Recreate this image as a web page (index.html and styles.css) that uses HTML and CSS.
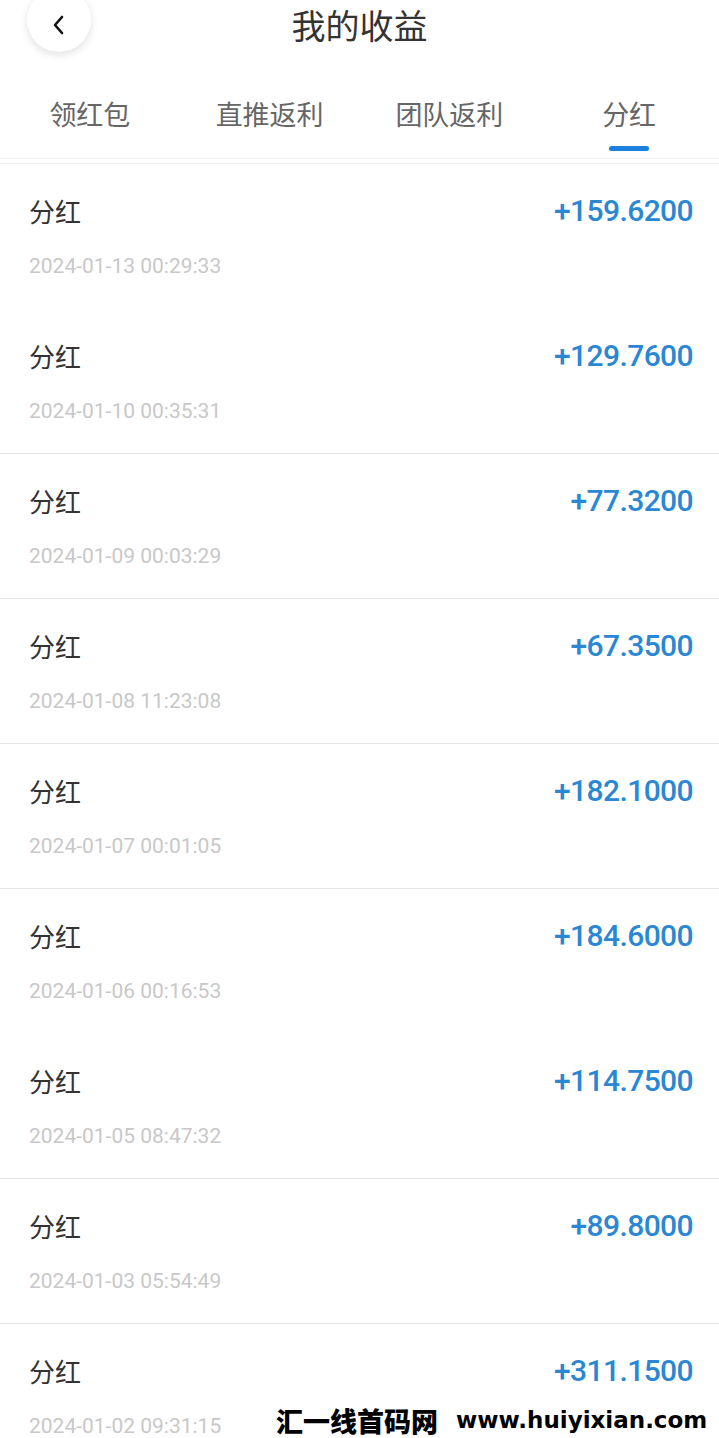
FILE: index.html
```html
<!DOCTYPE html>
<html lang="zh-CN">
<head>
  <meta charset="utf-8">
  <meta name="viewport" content="width=device-width,initial-scale=1">
  <title>我的收益</title>
  <link rel="stylesheet" href="styles.css">
</head>
<body>
  <header>
    <div class="topbar">
      <a class="back">
        <svg width="16" height="22" viewBox="0 0 16 22"><polyline points="11,3 4,11 11,19" fill="none" stroke="#111" stroke-width="2.6" stroke-linecap="round" stroke-linejoin="round"/></svg>
      </a>
      <h1>我的收益</h1>
    </div>
    <nav class="tabs">
      <div class="tab">领红包</div>
      <div class="tab">直推返利</div>
      <div class="tab">团队返利</div>
      <div class="tab active">分红</div>
    </nav>
  </header>

  <main class="list">
    <div class="row no-line">
      <div class="line"><span class="name">分红</span><span class="amount">+159.6200</span></div>
      <div class="date">2024-01-13 00:29:33</div>
    </div>
    <div class="row">
      <div class="line"><span class="name">分红</span><span class="amount">+129.7600</span></div>
      <div class="date">2024-01-10 00:35:31</div>
    </div>
    <div class="row">
      <div class="line"><span class="name">分红</span><span class="amount">+77.3200</span></div>
      <div class="date">2024-01-09 00:03:29</div>
    </div>
    <div class="row">
      <div class="line"><span class="name">分红</span><span class="amount">+67.3500</span></div>
      <div class="date">2024-01-08 11:23:08</div>
    </div>
    <div class="row">
      <div class="line"><span class="name">分红</span><span class="amount">+182.1000</span></div>
      <div class="date">2024-01-07 00:01:05</div>
    </div>
    <div class="row no-line">
      <div class="line"><span class="name">分红</span><span class="amount">+184.6000</span></div>
      <div class="date">2024-01-06 00:16:53</div>
    </div>
    <div class="row">
      <div class="line"><span class="name">分红</span><span class="amount">+114.7500</span></div>
      <div class="date">2024-01-05 08:47:32</div>
    </div>
    <div class="row">
      <div class="line"><span class="name">分红</span><span class="amount">+89.8000</span></div>
      <div class="date">2024-01-03 05:54:49</div>
    </div>
    <div class="row">
      <div class="line"><span class="name">分红</span><span class="amount">+311.1500</span></div>
      <div class="date">2024-01-02 09:31:15</div>
    </div>
  </main>

  <div class="watermark"><span class="wm-cn">汇一线首码网</span><span class="wm-url">www.huiyixian.com</span></div>
</body>
</html>
```

FILE: styles.css
```css
html {
  font-family: Roboto, "Noto Sans CJK SC", sans-serif;
}

body {
  margin: 0;
  height: 1438px;
  overflow: hidden;
  position: relative;
  background-color: #fff;
}

*, :after, :before {
  box-sizing: border-box;
}

header {
  border-bottom: 1px solid #eee;
}

.topbar {
  position: relative;
  height: 54px;
}

.topbar h1 {
  margin: 0;
  line-height: 50px;
  text-align: center;
  font-family: "Noto Sans CJK SC", sans-serif;
  font-size: 34px;
  font-weight: normal;
  color: #333;
}

.back {
  position: absolute;
  left: 27px;
  top: -12px;
  width: 64px;
  height: 64px;
  border-radius: 50%;
  background-color: #fff;
  box-shadow: 0 3px 8px rgba(0, 0, 0, 0.12);
  display: flex;
  align-items: flex-end;
  justify-content: center;
  padding-bottom: 16px;
}

.tabs {
  display: flex;
  height: 104px;
}

.tab {
  flex: 1;
  display: flex;
  flex-direction: column;
  align-items: center;
  padding-top: 42px;
  line-height: 36px;
  font-family: "Noto Sans CJK SC", sans-serif;
  font-size: 27px;
  color: #666;
}

.tab.active:after {
  content: "";
  display: block;
  width: 40px;
  height: 5px;
  margin-top: 14px;
  border-radius: 3px;
  background-color: #1a7fdf;
}

.list {
  margin-top: 4px;
  border-top: 1px solid #eee;
}

.row {
  height: 145px;
  padding: 28px 26px 0 29px;
  border-bottom: 1px solid #e6e6e6;
}

.row.no-line {
  border-bottom-color: transparent;
}

.line {
  display: flex;
  justify-content: space-between;
  align-items: center;
  height: 36px;
}

.name {
  font-family: "Noto Sans CJK SC", sans-serif;
  font-size: 26px;
  color: #333;
}

.amount {
  font-size: 30px;
  font-weight: 500;
  color: #2a87d4;
  letter-spacing: -0.6px;
}

.date {
  margin-top: 24px;
  line-height: 28px;
  font-size: 21px;
  color: #c8c8c8;
}

.watermark {
  position: absolute;
  left: 272px;
  top: 1403px;
  display: flex;
  align-items: center;
  padding: 0 4px;
  height: 34px;
  background-color: #fff;
  font-weight: 900;
  color: #000;
  white-space: nowrap;
}

.wm-cn {
  font-family: "Noto Sans CJK SC", sans-serif;
  font-size: 27px;
}

.wm-url {
  margin-left: 18px;
  font-family: "DejaVu Sans", sans-serif;
  font-size: 23px;
  font-weight: bold;
}
```
